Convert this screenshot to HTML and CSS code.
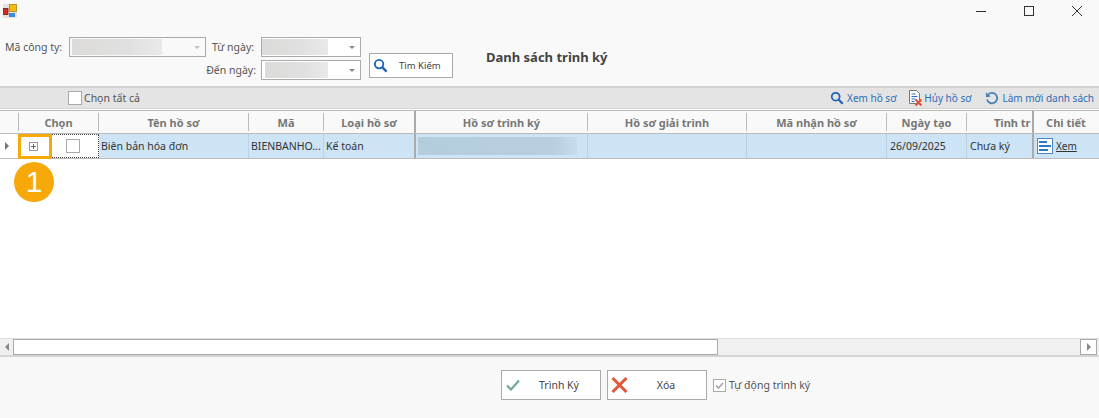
FILE: index.html
```html
<!DOCTYPE html>
<html lang="vi">
<head>
<meta charset="utf-8">
<title>Danh sách trình ký</title>
<link rel="stylesheet" href="styles.css">
</head>
<body>
<div class="window">
  <header class="top">
    <div class="titlebar">
      <svg class="app-icon" width="14" height="14" viewBox="0 0 14 14"><rect x="0" y="0" width="14" height="14" fill="#e6e3dc"/><rect x="6.500" y="0.500" width="7" height="7" fill="#f4bb10" stroke="#b5851a" stroke-width=".8"/><rect x="0.500" y="4.500" width="4.500" height="6" fill="#d42a20" stroke="#7a1a14" stroke-width=".8"/><rect x="6" y="9" width="6" height="4" fill="#3f8be0"/></svg>
      <div class="win-btns">
        <svg width="10" height="10" viewBox="0 0 10 10"><path d="M0 5.500h10" stroke="#333" stroke-width="1"/></svg>
        <svg width="10" height="10" viewBox="0 0 10 10"><rect x=".5" y=".5" width="9" height="9" fill="none" stroke="#333"/></svg>
        <svg width="10" height="10" viewBox="0 0 10 10"><path d="M0 0l10 10M10 0L0 10" stroke="#333" stroke-width="1"/></svg>
      </div>
    </div>
    <div class="filters">
      <div class="fields">
        <label class="lbl lbl-a">Mã công ty:</label>
        <div class="combo combo-co disabled"><span class="blur blur-co"></span><span class="caret"></span></div>
        <label class="lbl lbl-b">Từ ngày:</label>
        <div class="combo combo-date"><span class="blur blur-date"></span><span class="caret"></span></div>
        <label class="lbl lbl-c">Đến ngày:</label>
        <div class="combo combo-date combo-to"><span class="blur blur-date2"></span><span class="caret"></span></div>
      </div>
      <button class="search" type="button">
        <svg width="15" height="15" viewBox="0 0 16 16"><circle cx="6.500" cy="6.500" r="4.500" fill="none" stroke="#1f62b8" stroke-width="2"/><path d="M10 10l4.500 4.500" stroke="#1f62b8" stroke-width="2.600"/></svg>
        <span>Tìm Kiếm</span>
      </button>
      <h1 class="heading">Danh sách trình ký</h1>
    </div>
  </header>

  <div class="toolbar">
    <label class="all"><span class="box"></span>Chọn tất cả</label>
    <div class="actions">
      <a class="act act-view"><svg width="14" height="14" viewBox="0 0 16 16"><circle cx="6.500" cy="6.500" r="4.500" fill="none" stroke="#1f62b8" stroke-width="2"/><path d="M10 10l4.500 4.500" stroke="#1f62b8" stroke-width="2.600"/></svg>Xem hồ sơ</a>
      <a class="act act-cancel"><svg width="13" height="16" viewBox="0 0 13 16"><path d="M.5.500h7l3 3v10H.5z" fill="#fff" stroke="#777"/><path d="M2.500 4h4M2.500 6.500h6M2.500 9h4M2.500 11.500h3" stroke="#2c6fbe"/><path d="M6.500 9.500l6 6M12.500 9.500l-6 6" stroke="#e0533a" stroke-width="2.200"/></svg>Hủy hồ sơ</a>
      <a class="act act-refresh"><svg width="14" height="14" viewBox="0 0 14 14"><path d="M3.200 3.500A5.200 5.200 0 1 1 2 8.500" fill="none" stroke="#4a7fb5" stroke-width="1.800"/><path d="M.8 1.200l.3 5 4.700-.8z" fill="#4a7fb5"/></svg>Làm mới danh sách</a>
    </div>
  </div>

  <section class="grid">
    <div class="row head">
      <div class="cell c-rh"></div>
      <div class="cell c-sel">Chọn</div>
      <div class="cell c-name">Tên hồ sơ</div>
      <div class="cell c-code">Mã</div>
      <div class="cell c-type thick">Loại hồ sơ</div>
      <div class="cell c-file">Hồ sơ trình ký</div>
      <div class="cell c-exp">Hồ sơ giải trình</div>
      <div class="cell c-recv">Mã nhận hồ sơ</div>
      <div class="cell c-date">Ngày tạo</div>
      <div class="cell c-state thick">Tình tr</div>
      <div class="cell c-detail">Chi tiết</div>
    </div>
    <div class="row data">
      <div class="cell c-rh"><span class="arrow"></span></div>
      <div class="cell c-sel sel-split">
        <span class="expander"><svg width="9" height="9" viewBox="0 0 9 9"><rect x=".5" y=".5" width="8" height="8" fill="none" stroke="#999"/><path d="M2 4.500h5M4.500 2v5" stroke="#666"/></svg></span>
        <span class="check-wrap"><span class="box"></span></span>
      </div>
      <div class="cell c-name">Biên bản hóa đơn</div>
      <div class="cell c-code">BIENBANHO...</div>
      <div class="cell c-type thick">Kế toán</div>
      <div class="cell c-file"><span class="blur blur-file"></span></div>
      <div class="cell c-exp"></div>
      <div class="cell c-recv"></div>
      <div class="cell c-date">26/09/2025</div>
      <div class="cell c-state thick">Chưa ký</div>
      <div class="cell c-detail"><svg width="16" height="16" viewBox="0 0 16 16"><rect x=".5" y=".5" width="15" height="15" fill="#fff" stroke="#4a86c8"/><path d="M2 4h8M2 8h12M2 12h9" stroke="#2a78d0" stroke-width="2"/></svg><a class="view">Xem</a></div>
    </div>
    <div class="empty"></div>
    <div class="hscroll">
      <span class="sb-btn"><span class="tri-l"></span></span>
      <span class="thumb"></span>
      <span class="sb-btn sb-end"><span class="tri-r"></span></span>
    </div>
    <span class="mark"></span>
    <span class="badge">1</span>
  </section>

  <footer class="bottom">
    <button class="btn" type="button"><svg width="14" height="12" viewBox="0 0 14 12"><path d="M1 6.500l4 4L13 1.500" fill="none" stroke="#6fa898" stroke-width="2.200"/></svg><span>Trình Ký</span></button>
    <button class="btn" type="button"><svg width="17" height="16" viewBox="0 0 17 16"><path d="M1.500 1l14 14M15.500 1l-14 14" stroke="#e0573c" stroke-width="3"/></svg><span>Xóa</span></button>
    <label class="auto"><span class="box small"><svg width="11" height="11" viewBox="0 0 11 11"><path d="M2 5.500l2.500 2.500L9 3" fill="none" stroke="#999" stroke-width="1.300"/></svg></span>Tự động trình ký</label>
  </footer>
</div>
</body>
</html>
```

FILE: styles.css
```css
* { box-sizing: border-box; }
html, body { margin: 0; padding: 0; }
body { width: 1099px; height: 418px; overflow: hidden; font-family: "Noto Sans", "Open Sans", sans-serif; font-size: 10.500px; color: #444; background: #f9f9f9; }
.window { display: flex; flex-direction: column; height: 418px; }

.top { height: 88px; border-bottom: 2px solid #d2d2d2; background: #f9f9f9; }
.titlebar { height: 24px; display: flex; justify-content: space-between; align-items: flex-start; padding: 4px 0 0 3px; }
.app-icon { display: block; }
.win-btns { display: flex; gap: 38px; padding: 2px 17px 0 0; }
.win-btns svg { display: block; }

.filters { display: flex; align-items: flex-start; padding-top: 13px; }
.fields { display: grid; grid-template-columns: 69px 133px 59px 100px; grid-auto-rows: 20px; row-gap: 3px; width: 361px; }
.lbl { display: flex; align-items: center; color: #555; white-space: nowrap; }
.lbl-a { padding-left: 5px; }
.lbl-b { padding-left: 10px; grid-column: 3; grid-row: 1; }
.lbl-c { grid-column: 1 / 4; grid-row: 2; justify-content: flex-end; padding-right: 5px; }
.combo { position: relative; height: 20px; border: 1px solid #aaa; background: #fff; display: flex; align-items: center; padding-left: 2px; }
.combo-co { grid-column: 2; grid-row: 1; width: 137px; }
.combo-date { grid-column: 4; grid-row: 1; padding-left: 0; }
.combo-to { grid-row: 2; padding-left: 3px; }
.combo.disabled { background: #f9f9f9; }
.blur { display: block; background: linear-gradient(90deg, #dcdbd9, #e0e0e0 60%, #e9e9e9); }
.blur-co { width: 90px; height: 16px; }
.blur-date { width: 66px; height: 16px; }
.blur-date2 { width: 63px; height: 16px; }
.caret { position: absolute; right: 5px; top: 8px; width: 0; height: 0; border: 3px solid transparent; border-top: 3px solid #888; }
.disabled .caret { border-top-color: #c4c4c4; }

.search { display: flex; align-items: center; width: 84px; height: 25px; margin: 16px 0 0 8px; padding: 0 0 0 3px; border: 1px solid #aaa; background: #fff; font: inherit; font-size: 9.500px; color: #444; }
.search span { margin-left: 11px; }
.heading { margin: 11px 0 0 33px; font-size: 13px; line-height: 18px; font-weight: 700; color: #444; }

.toolbar { height: 21px; display: flex; align-items: center; justify-content: space-between; background: #e4e4e4; border-bottom: 1px solid #d4d4d4; padding: 0 5px 0 68px; }
.all { display: flex; align-items: center; gap: 2px; color: #555; }
.box { display: block; width: 14px; height: 14px; border: 1px solid #aaa; background: #fff; position: relative; }
.actions { display: flex; }
.act { display: flex; align-items: center; gap: 3px; color: #2b6db5; font-size: 10px; white-space: nowrap; }
.act-cancel { gap: 2px; margin-left: 13px; }
.act-refresh { margin-left: 14px; }

.grid { position: relative; flex: 1; display: flex; flex-direction: column; background: #fff; border-top: 1px solid #fff; min-height: 0; }
.row { display: flex; }
.head { height: 24px; background: #f9f9f9; border-top: 1px solid #bbb; border-bottom: 1px solid #bbb; font-size: 11px; font-weight: 700; color: #777; }
.cell { display: flex; align-items: center; overflow: hidden; white-space: nowrap; flex: none; }
.head .cell { justify-content: center; border-right: 1px solid #bbb; margin: 2px 0 0; height: 18px; }
.head .thick { border-right: 2px solid #aaa; height: 22px; margin: 0; }
.head .c-state { justify-content: flex-start; padding-left: 27px; }
.head .c-detail { border-right: 0; padding-right: 2px; }
.data { height: 25px; background: #cde4f7; border-bottom: 1px solid #bbb; color: #333; }
.data .cell { height: 24px; padding-left: 2px; padding-bottom: 1px; border-right: 1px solid #bcd2e4; }
.data .thick { border-right: 2px solid #aaa; }
.data .c-date, .data .c-state { padding-left: 3px; }
.c-rh { width: 19px; }
.c-sel { width: 80px; }
.c-name { width: 150px; }
.c-code { width: 75px; }
.c-type { width: 92px; }
.c-file { width: 172px; }
.c-exp { width: 159px; }
.c-recv { width: 140px; }
.c-date { width: 80px; }
.c-state { width: 67px; }
.c-detail { width: 66px; }
.data .c-rh { background: #fff; border-right: 0; padding-left: 5px; }
.arrow { width: 0; height: 0; border-left: 4px solid #777; border-top: 4px solid transparent; border-bottom: 4px solid transparent; }
.data .sel-split { padding: 0; border: 1px dotted #444; border-left: 0; background: #fff; }
.expander { width: 29px; display: flex; justify-content: center; }
.check-wrap { flex: 1; display: flex; justify-content: center; }
.blur-file { width: 159px; height: 18px; background: linear-gradient(90deg, #b4cddd, #b8cfdf 85%, #c8dcec); }
.data .c-detail { border-right: 0; gap: 3px; padding-left: 3px; }
.view { color: #333; text-decoration: underline; font-size: 10px; }

.empty { flex: 1; }
.hscroll { height: 17px; display: flex; background: #f0f0f0; border-top: 1px solid #ddd; }
.sb-btn { width: 13px; height: 16px; display: flex; align-items: center; justify-content: center; }
.sb-end { margin-left: auto; width: 17px; margin-right: 2px; background: #fff; border: 1px solid #aaa; }
.tri-l { border: 4px solid transparent; border-left: 0; border-right: 4px solid #888; }
.tri-r { border: 4px solid transparent; border-right: 0; border-left: 4px solid #888; }
.thumb { width: 705px; height: 16px; background: #fff; border: 1px solid #aaa; }

.mark { position: absolute; left: 18px; top: 24px; width: 34px; height: 25px; border: 3px solid #f7a90a; }
.badge { position: absolute; left: 14px; top: 52px; width: 40px; height: 40px; border-radius: 50%; background: #f7a90a; color: #fff; font-family: "Liberation Sans", sans-serif; font-size: 30px; line-height: 40px; text-align: center; }

.bottom { height: 63px; border-top: 2px solid #d4d4d4; background: #f8f8f8; display: flex; align-items: flex-start; padding: 13px 0 0 501px; gap: 6px; }
.btn { display: flex; align-items: center; width: 100px; height: 30px; border: 1px solid #aaa; background: #fff; padding: 0 0 0 3px; font: inherit; color: #444; }
.btn:first-child { padding-left: 4px; }
.btn span { flex: 1; text-align: center; padding-right: 2px; }
.auto { display: flex; align-items: center; gap: 3px; height: 30px; color: #555; }
.small { width: 13px; height: 13px; }
.small svg { display: block; }
```
